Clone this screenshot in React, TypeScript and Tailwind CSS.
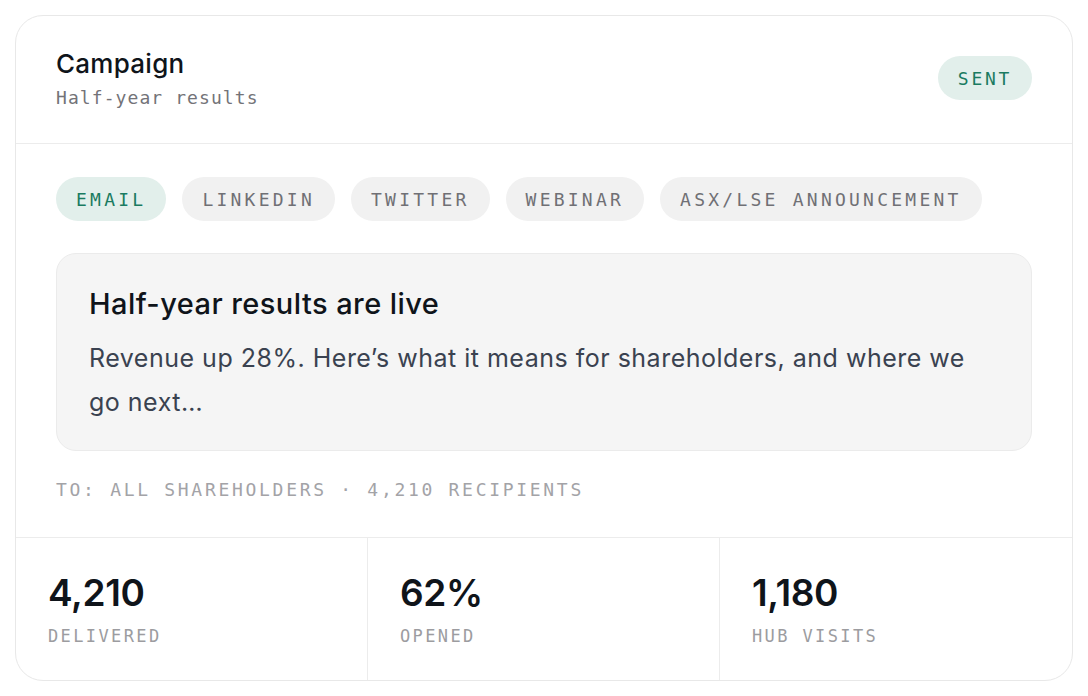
import React from 'react';

const mono = "font-['DejaVu_Sans_Mono','Liberation_Mono',monospace]";
const sans = "font-['Inter','Noto_Sans',sans-serif]";

const channels = ['EMAIL', 'LINKEDIN', 'TWITTER', 'WEBINAR', 'ASX/LSE ANNOUNCEMENT'];

const stats = [
  { value: '4,210', label: 'DELIVERED' },
  { value: '62%', label: 'OPENED' },
  { value: '1,180', label: 'HUB VISITS' },
];

export default function App() {
  return (
    <div className={`w-[1088px] h-[696px] bg-white p-[15px] ${sans}`}>
      <div className="h-full rounded-[28px] border border-[#e8e8e8] bg-white overflow-hidden flex flex-col">
        {/* Header */}
        <div className="flex items-start justify-between px-10 pt-8 pb-[31px] border-b border-[#ececec]">
          <div className="flex flex-col gap-1">
            <h1 className="text-[26px] leading-8 font-medium tracking-[0.01em] text-[#0f141a]">Campaign</h1>
            <p className={`${mono} text-[18px] leading-7 tracking-[0.06em] text-[#737378]`}>Half-year results</p>
          </div>
          <span className={`${mono} mt-2 h-11 px-5 rounded-full bg-[#e2efeb] text-[#1a7b61] text-[18px] tracking-[0.15em] flex items-center`}>
            SENT
          </span>
        </div>

        {/* Body */}
        <div className="px-10 pt-[33px] pb-[33px] border-b border-[#ececec]">
          <div className="flex gap-4">
            {channels.map((c, i) => (
              <span
                key={c}
                className={`${mono} h-11 px-5 rounded-full flex items-center text-[18px] tracking-[0.18em] ${
                  i === 0 ? 'bg-[#e2efeb] text-[#1a7b61]' : 'bg-[#f1f1f1] text-[#707075]'
                }`}
              >
                {c}
              </span>
            ))}
          </div>

          <div className="mt-8 rounded-[20px] border border-[#ebebeb] bg-[#f5f5f5] px-8 pt-8 pb-[26px]">
            <h2 className="text-[29px] leading-9 font-medium tracking-[0.015em] text-[#0f141a]">Half-year results are live</h2>
            <p className="mt-3.5 text-[25px] leading-[44px] tracking-[0.02em] text-[#3a4250]">
              Revenue up 28%. Here’s what it means for shareholders, and where we go next…
            </p>
          </div>

          <p className={`${mono} mt-[25px] text-[18px] leading-7 tracking-[0.15em] text-[#a3a3a7]`}>
            TO: ALL SHAREHOLDERS · 4,210 RECIPIENTS
          </p>
        </div>

        {/* Stats */}
        <div className="grid grid-cols-3 flex-1">
          {stats.map((s, i) => (
            <div key={s.label} className={`px-8 pt-[35px] pb-8 ${i < 2 ? 'border-r border-[#ececec]' : ''}`}>
              <div className="text-[37px] leading-10 font-semibold text-[#0f141a] tracking-[-0.01em]">{s.value}</div>
              <div className={`${mono} mt-[11px] text-[17px] leading-6 tracking-[0.14em] text-[#9c9ca0]`}>{s.label}</div>
            </div>
          ))}
        </div>
      </div>
    </div>
  );
}
